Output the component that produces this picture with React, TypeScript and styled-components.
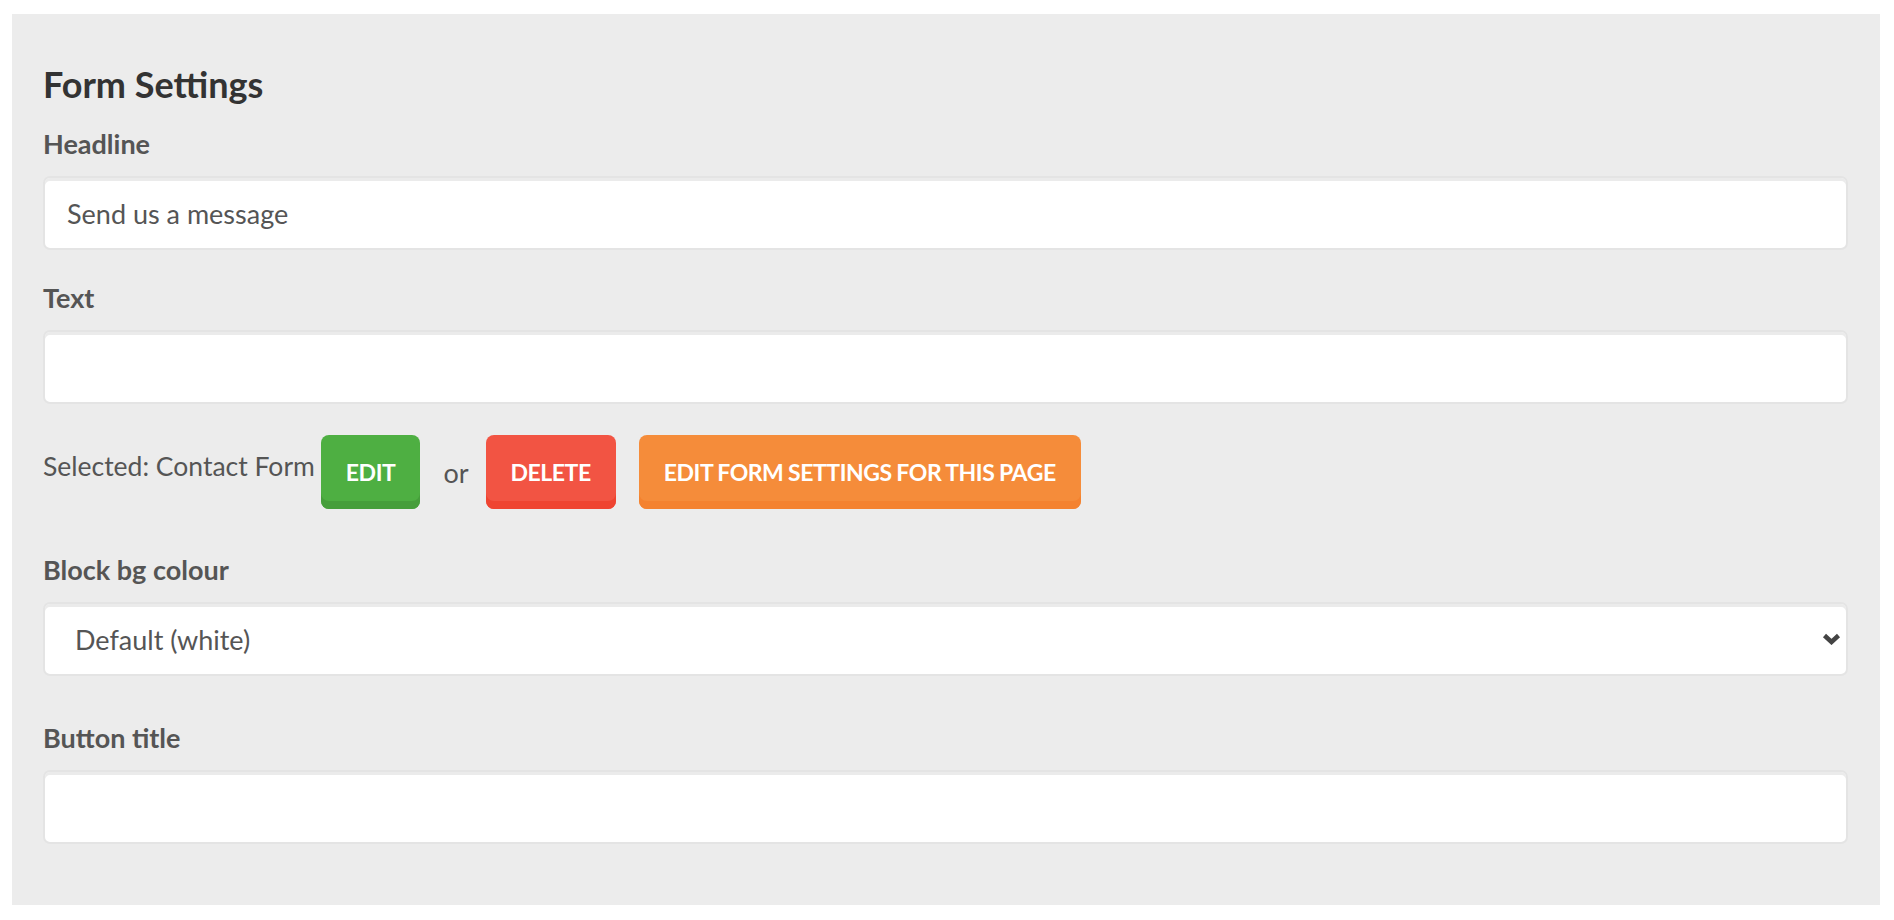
import React from "react";
import styled, { createGlobalStyle } from "styled-components";

const Global = createGlobalStyle`
  html, body { margin: 0; padding: 0; background: #ffffff; }
  body { font-family: "Lato", "Open Sans", sans-serif; color: #555; }
  * { box-sizing: border-box; }
`;

const Page = styled.div`
  padding: 14px 14px 17px 12px;
`;

const Panel = styled.section`
  background: #ececec;
  padding: 52px 32px 61px 31px;
`;

const Heading = styled.h2`
  margin: 0 0 28px;
  font-size: 36px;
  line-height: 1;
  font-weight: 700;
  color: #333;
`;

const Field = styled.div<{ $after: number }>`
  display: flex;
  flex-direction: column;
  margin-bottom: ${(p) => p.$after}px;
`;

const Label = styled.label`
  display: block;
  margin: 0 0 19px;
  font-size: 27px;
  line-height: 1;
  font-weight: 700;
  color: #555;
`;

const TextInput = styled.input`
  display: block;
  width: 100%;
  height: 74px;
  padding: 0 22px;
  border: 2px solid #e4e4e4;
  border-radius: 7px;
  box-shadow: inset 0 3px 0 #ebebeb;
  background: #fff;
  font-family: "Lato", "Open Sans", sans-serif;
  font-size: 27px;
  color: #555;
  outline: none;
`;

const SelectWrap = styled.div`
  position: relative;
`;

const Select = styled.select`
  display: block;
  width: 100%;
  height: 74px;
  padding: 0 60px 0 30px;
  border: 2px solid #e4e4e4;
  border-radius: 7px;
  box-shadow: inset 0 3px 0 #ebebeb;
  background: #fff;
  appearance: none;
  font-family: "Lato", "Open Sans", sans-serif;
  font-size: 27px;
  color: #555;
  outline: none;
`;

const Chevron = styled.svg`
  position: absolute;
  right: 7px;
  top: 50%;
  margin-top: -6px;
  width: 19px;
  height: 12px;
  pointer-events: none;
`;

const ActionRow = styled.div`
  display: flex;
  align-items: center;
  height: 74px;
  margin-bottom: 47px;
`;

const Selected = styled.span`
  font-size: 26.5px;
  line-height: 1;
  color: #555;
  margin: 0 6px 11px 0;
  white-space: nowrap;
`;

const Or = styled.span`
  font-size: 27px;
  line-height: 1;
  color: #555;
  margin: 0 17px 0 23px;
`;

const tones = {
  green: ["#4eaf42", "#469e3b"],
  red: ["#f25443", "#ef4431"],
  orange: ["#f58c3a", "#f4822f"],
} as const;

const ActionButton = styled.button<{ $tone: keyof typeof tones; $ml?: number }>`
  height: 74px;
  margin-left: ${(p) => p.$ml ?? 0}px;
  padding: 0 25px;
  border: none;
  border-radius: 8px;
  background: ${(p) => tones[p.$tone][0]};
  box-shadow: inset 0 -8px 0 ${(p) => tones[p.$tone][1]};
  color: #fff;
  font-family: "Lato", "Open Sans", sans-serif;
  font-size: 23px;
  font-weight: 700;
  line-height: 1;
  letter-spacing: -0.45px;
  word-spacing: -0.5px;
  text-transform: uppercase;
  white-space: nowrap;
  cursor: pointer;
`;

export default function App() {
  return (
    <>
      <Global />
      <Page>
        <Panel>
          <Heading>Form Settings</Heading>
          <Field $after={34}>
            <Label>Headline</Label>
            <TextInput defaultValue="Send us a message" />
          </Field>
          <Field $after={31}>
            <Label>Text</Label>
            <TextInput defaultValue="" />
          </Field>
          <ActionRow>
            <Selected>Selected: Contact Form</Selected>
            <ActionButton $tone="green">Edit</ActionButton>
            <Or>or</Or>
            <ActionButton $tone="red">Delete</ActionButton>
            <ActionButton $tone="orange" $ml={23}>
              Edit form settings for this page
            </ActionButton>
          </ActionRow>
          <Field $after={48}>
            <Label>Block bg colour</Label>
            <SelectWrap>
              <Select defaultValue="default">
                <option value="default">Default (white)</option>
              </Select>
              <Chevron viewBox="0 0 19 12">
                <polyline
                  points="2.5,2.5 9.5,9 16.5,2.5"
                  fill="none"
                  stroke="#444"
                  strokeWidth="4.5"
                  strokeLinecap="butt"
                  strokeLinejoin="miter"
                />
              </Chevron>
            </SelectWrap>
          </Field>
          <Field $after={0}>
            <Label>Button title</Label>
            <TextInput defaultValue="" />
          </Field>
        </Panel>
      </Page>
    </>
  );
}
